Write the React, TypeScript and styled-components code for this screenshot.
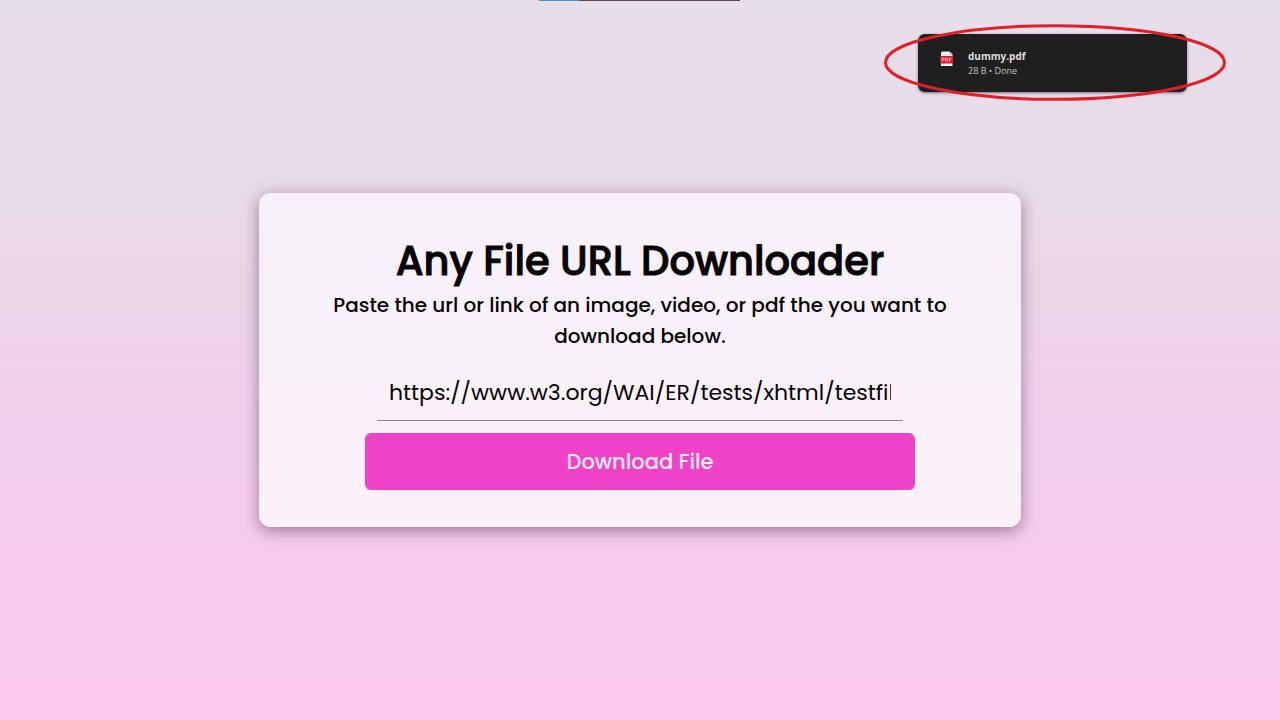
import React, { useState } from "react";
import styled, { createGlobalStyle } from "styled-components";

const GlobalStyle = createGlobalStyle`
  * { box-sizing: border-box; margin: 0; padding: 0; }
  body {
    font-family: Poppins, Inter, sans-serif;
    color: #050305;
  }
`;

const Page = styled.main`
  position: relative;
  display: flex;
  align-items: center;
  justify-content: center;
  min-height: 100vh;
  padding: 16px;
  overflow: hidden;
  background: linear-gradient(#e6dfe9, #e9d9e9 30%, #f3cfec 60%, #fcc8f0);
`;

const TopStrip = styled.div`
  position: absolute;
  top: 0;
  left: 50%;
  width: 201px;
  height: 1px;
  margin-left: -101px;
  background: linear-gradient(90deg, #4c8cc8 40px, #57465b 40px);
`;

const Card = styled.form`
  display: flex;
  flex-direction: column;
  align-items: center;
  width: 100%;
  max-width: 762px;
  padding: 39px 56px 37px;
  border-radius: 12px;
  background: linear-gradient(#f9f1f9, #f8f1f9 40%, #fcf1f9);
  box-shadow: 0 4px 16px rgba(70, 30, 70, 0.5);
`;

const Title = styled.h1`
  font-size: 40px;
  font-weight: 500;
  line-height: 58px;
  text-align: center;
  -webkit-text-stroke: 1px currentColor;
`;

const Lead = styled.label`
  font-size: 20px;
  font-weight: 500;
  line-height: 31px;
  text-align: center;
`;

const UrlInput = styled.input`
  width: 100%;
  max-width: 526px;
  height: 59px;
  margin: 10px 12px 12px;
  padding: 2px 12px 0;
  border: 0;
  border-bottom: 1px solid #8e8190;
  outline: 0;
  background: transparent;
  color: inherit;
  font: inherit;
  font-size: 22px;
`;

const DownloadButton = styled.button`
  width: 100%;
  max-width: 550px;
  height: 57px;
  border: 0;
  border-radius: 6px;
  background: #ef43c7;
  color: #fdeafa;
  font: inherit;
  font-size: 21px;
  font-weight: 500;
  cursor: pointer;
`;

const Notice = styled.aside`
  position: absolute;
  top: 24px;
  right: 54px;
  padding: 10px 39px 10px 34px;
`;

const Toast = styled.div`
  display: flex;
  gap: 14px;
  width: 269px;
  height: 58px;
  padding: 15px 22px;
  border-radius: 7px;
  background: #1f1f1f;
  box-shadow: 0 1px 3px rgba(0, 0, 0, 0.5);
  font-family: "Segoe UI", "Open Sans", "Noto Sans", sans-serif;
`;

const FileName = styled.p`
  color: #dedede;
  font-size: 10px;
  font-weight: 700;
  line-height: 15px;
`;

const FileStatus = styled.p`
  color: #c4c4c4;
  font-size: 9px;
  line-height: 14px;
`;

const FileIcon = styled.svg`
  flex: none;
  width: 14px;
  height: 20px;
`;

const Highlight = styled.svg`
  position: absolute;
  inset: 0;
  width: 100%;
  height: 100%;
  pointer-events: none;
`;

export default function App() {
  const [url, setUrl] = useState(
    "https://www.w3.org/WAI/ER/tests/xhtml/testfiles/resources/pdf/dummy.pdf"
  );

  return (
    <>
      <GlobalStyle />
      <Page>
        <TopStrip />
        <Card onSubmit={(e: React.FormEvent) => e.preventDefault()}>
          <Title>Any File URL Downloader</Title>
          <Lead htmlFor="file-url">
            Paste the url or link of an image, video, or pdf the you want to download below.
          </Lead>
          <UrlInput
            id="file-url"
            type="text"
            value={url}
            onChange={(e: React.ChangeEvent<HTMLInputElement>) => setUrl(e.target.value)}
          />
          <DownloadButton type="submit">Download File</DownloadButton>
        </Card>
        <Notice>
          <Toast>
            <FileIcon viewBox="0 0 14 20" aria-hidden="true">
              <path d="M1 4q0-1.500 1.500-1.500H9.500L12.500 5.500V17H1Z" fill="#f7eeee" />
              <path d="M9.500 2.500v3h3Z" fill="#c9b9b9" />
              <rect x="0" y="7" width="13" height="7.500" rx="0.700" fill="#e0182c" />
              <path
                d="M2.200 12.700V9h1.200q1 0 1 1.100t-1 1.100H2.200M5.800 9v3.300h.700q1.300 0 1.300-1.650T6.500 9ZM9.400 12.700V9h2M9.400 10.800h1.600"
                fill="none"
                stroke="#ffdede"
                strokeWidth="0.800"
              />
            </FileIcon>
            <div>
              <FileName>dummy.pdf</FileName>
              <FileStatus>28 B • Done</FileStatus>
            </div>
          </Toast>
          <Highlight viewBox="0 0 342 78" preserveAspectRatio="none" aria-hidden="true">
            <ellipse cx="171" cy="38.500" rx="169.500" ry="36.800" fill="none" stroke="#e01f2b" strokeWidth="3" />
          </Highlight>
        </Notice>
      </Page>
    </>
  );
}
